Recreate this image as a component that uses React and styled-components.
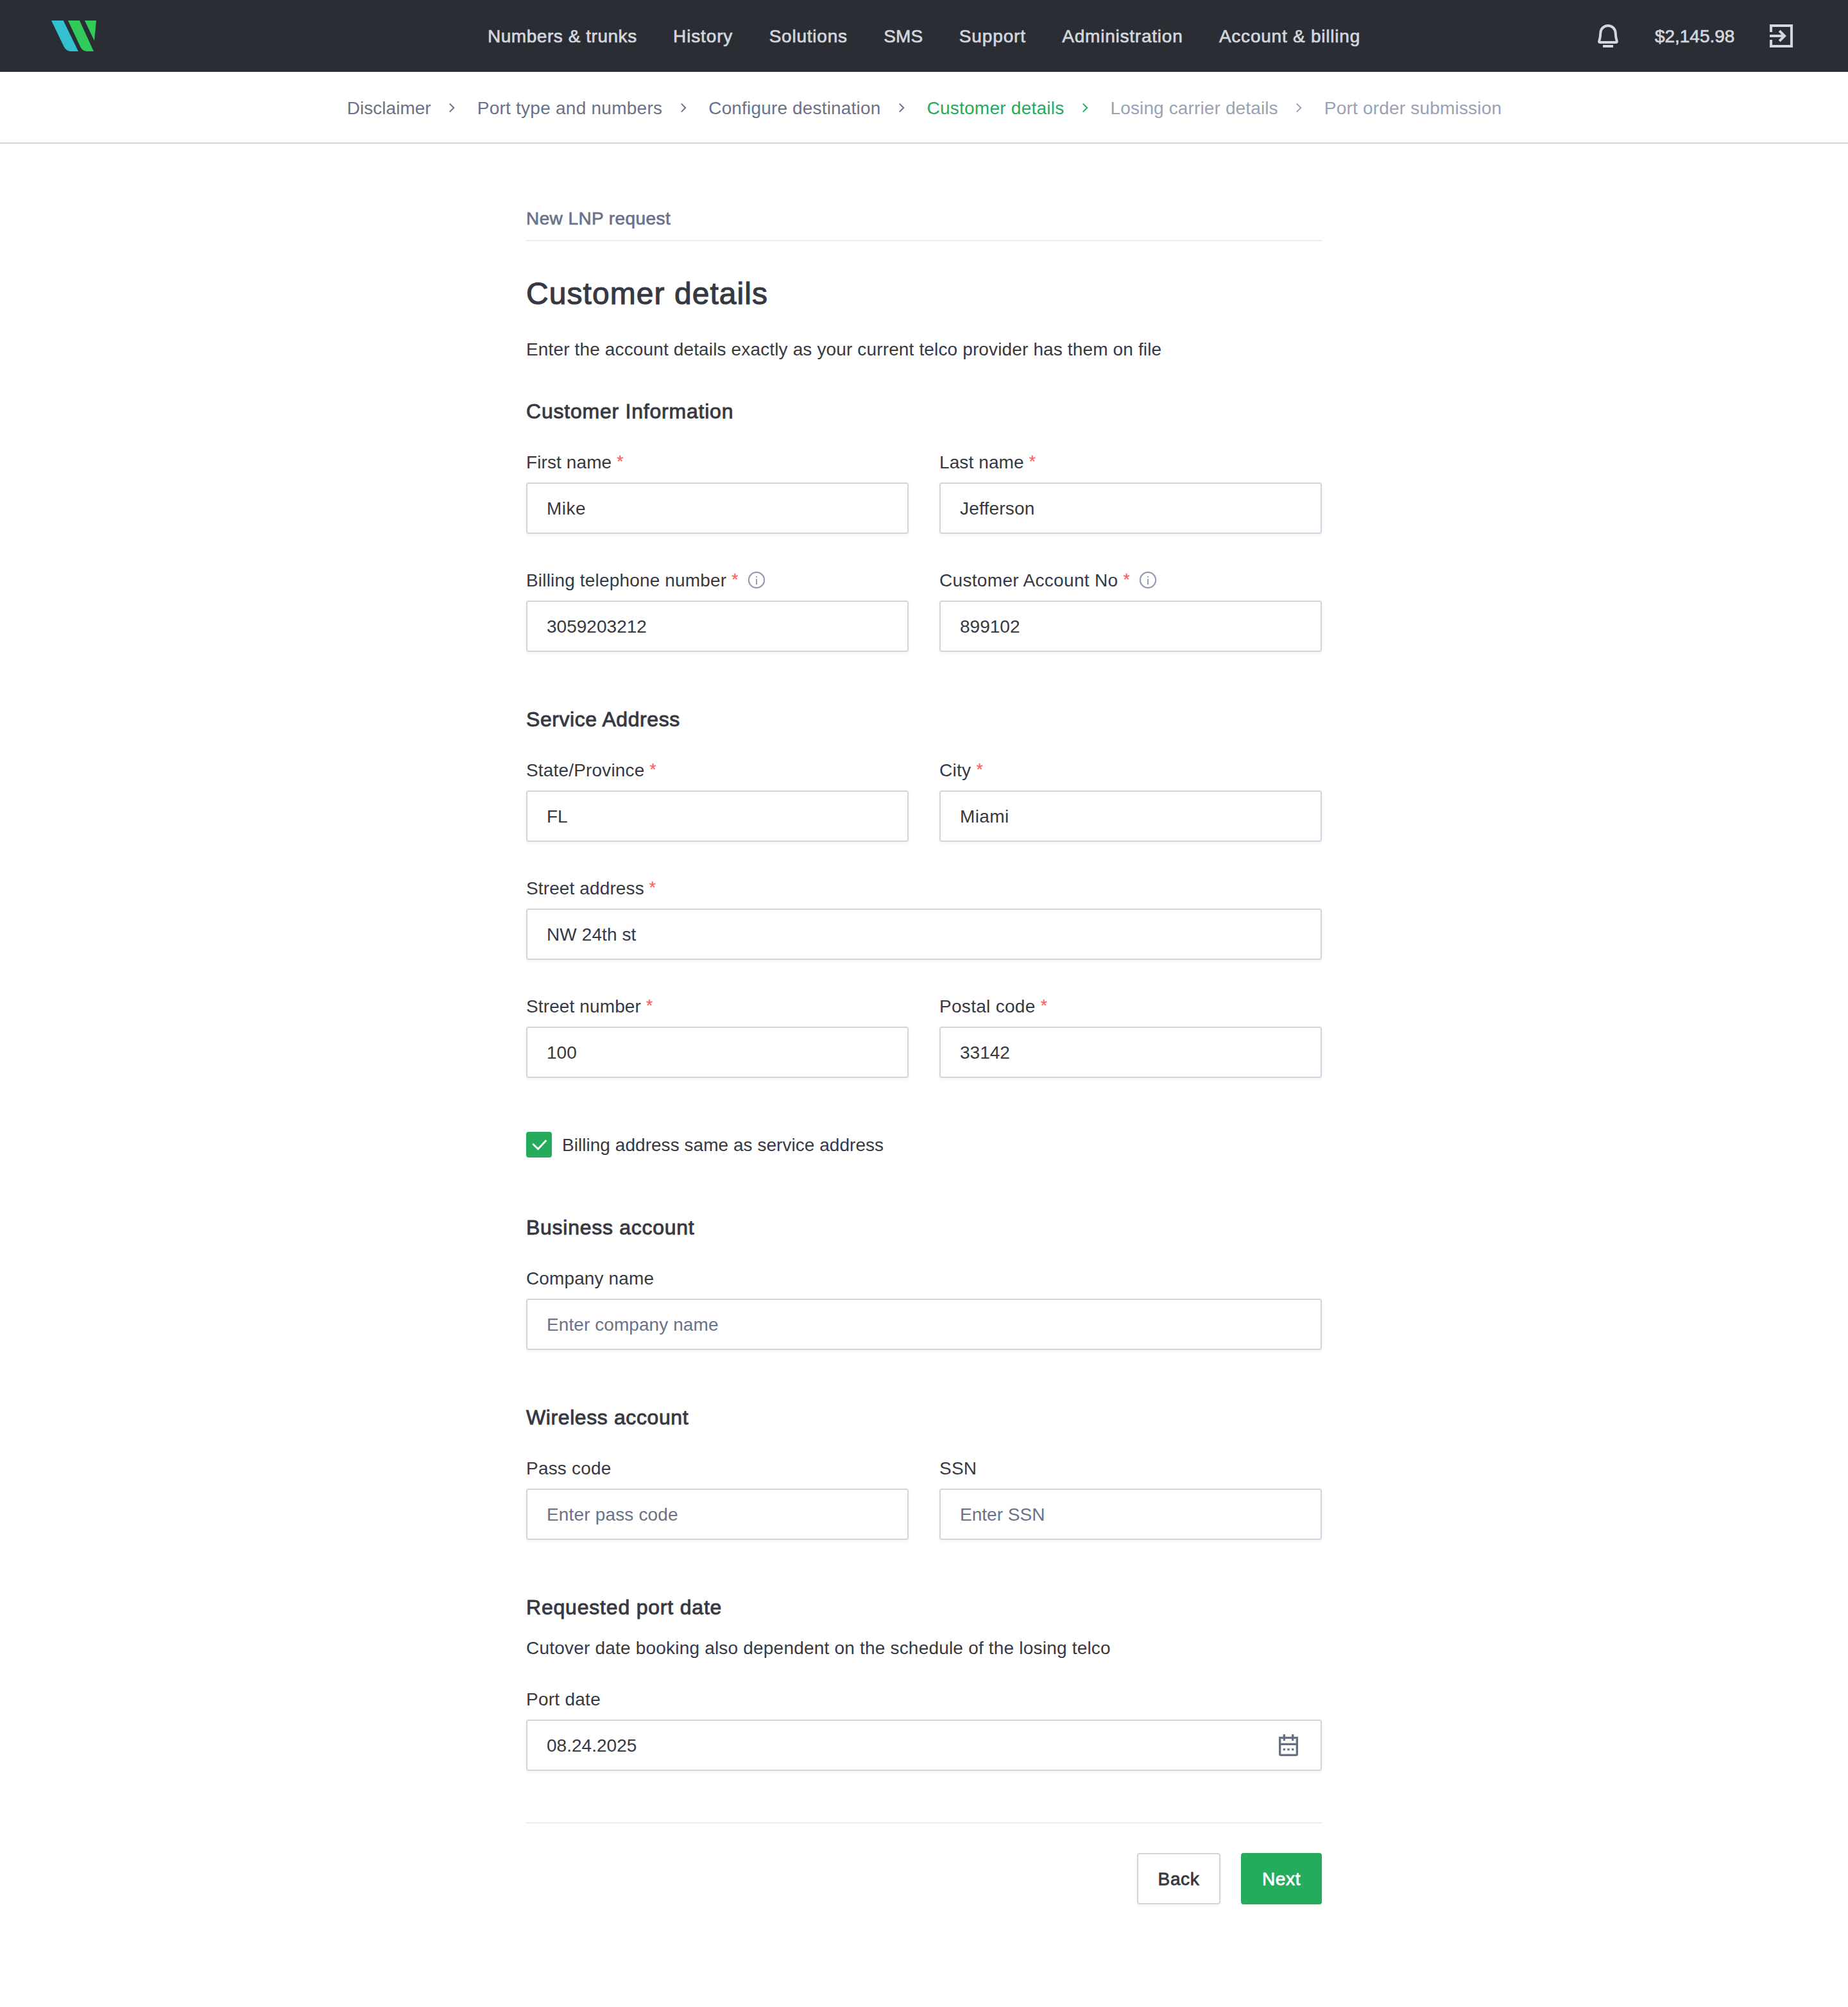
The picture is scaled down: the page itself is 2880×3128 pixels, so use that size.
import React, { Component } from 'react';
import styled, { createGlobalStyle, css } from 'styled-components';

const navItems = [
    { text: 'Numbers & trunks', track: 0.54 },
    { text: 'History', track: 0.86 },
    { text: 'Solutions', track: 0.78 },
    { text: 'SMS', track: 0.15 },
    { text: 'Support', track: 0.87 },
    { text: 'Administration', track: 0.77 },
    { text: 'Account & billing', track: 0.77 }
];

const steps = [
    { text: 'Disclaimer', track: 0.03 },
    { text: 'Port type and numbers', track: 0.25 },
    { text: 'Configure destination' },
    { text: 'Customer details', track: 0.25, status: 'active' },
    { text: 'Losing carrier details', track: 0.13, status: 'next' },
    { text: 'Port order submission', track: 0.2, status: 'next' }
];

const Logo = () => (
    <svg width="70" height="48" viewBox="0 0 70 48">
        <path d="M0 0H18.7L42 48H31.5C26 48 22 45.5 19.5 40.5Z" fill="#33c0cf" />
        <path d="M26 0H44L66 48H56.500C51 48 47.500 45.500 45 40.500Z" fill="#33ca5c" />
        <path d="M52 0H70L67 31.5Z" fill="#33ca5c" />
    </svg>
);

const BellIcon = () => (
    <svg width="48" height="48" viewBox="0 0 48 48" fill="none" stroke="currentColor" strokeWidth="4">
        <path d="M24 8C17.400 8 12.600 12.800 12.300 19.500C12.100 25 11.600 28 10.300 31.800Q9.500 34 11.400 34H36.600Q38.500 34 37.700 31.800C36.400 28 35.900 25 35.700 19.500C35.400 12.800 30.600 8 24 8Z" />
        <path d="M16 40H32" />
    </svg>
);

const LogoutIcon = () => (
    <svg width="48" height="48" viewBox="0 0 48 48" fill="none" stroke="currentColor" strokeWidth="4">
        <path d="M8 18V8H40V40H8V30" />
        <path d="M6 24H28M21.100 16L29.100 24L21.100 32" />
    </svg>
);

const InfoIcon = () => (
    <svg width="28" height="28" viewBox="0 0 28 28" fill="none" stroke="currentColor" strokeWidth="2.2">
        <circle cx="14" cy="14" r="12.1" />
        <path d="M14 8.200V9.900M14 12.300V21" strokeWidth="2" />
    </svg>
);

const CalendarIcon = () => (
    <svg width="40" height="40" viewBox="0 0 40 40" fill="none" stroke="currentColor" strokeWidth="3.33">
        <path d="M6.670 8.330H33.330V33.800Q33.330 35.330 31.800 35.330H8.200Q6.670 35.330 6.670 33.800Z" />
        <path d="M6 18.330H34M13.330 3V13M26.670 3V13" />
        <path d="M11.670 26.670H15M18.330 26.670H21.670M25 26.670H28.330" />
    </svg>
);

const Chevron = () => (
    <svg width="16" height="16" viewBox="0 0 16 16" fill="none" stroke="currentColor" strokeWidth="2">
        <path d="M4.800 1.600L11.200 8L4.800 14.400" />
    </svg>
);

const Field = ({ label, track, required, info, value, placeholder, valueTrack, icon }) => (
    <StyledField>
        <Label $track={track}>
            <span>{label}</span>
            {required && <Required>*</Required>}
            {info && <Info><InfoIcon /></Info>}
        </Label>
        <InputBox>
            <Input type="text" defaultValue={value} placeholder={placeholder} $track={valueTrack} />
            {icon}
        </InputBox>
    </StyledField>
);

class App extends Component {
    render() {
        return (
            <Page>
                <GlobalStyle />
                <Header>
                    <Logo />
                    <Nav>
                        {navItems.map(item => (
                            <NavLink key={item.text} $track={item.track}>{item.text}</NavLink>
                        ))}
                    </Nav>
                    <Account>
                        <BellIcon />
                        <NavLink $track={-0.05}>$2,145.98</NavLink>
                        <LogoutIcon />
                    </Account>
                </Header>
                <Steps>
                    {steps.map((step, i) => (
                        <Step key={step.text} $status={step.status}>
                            <StepText $track={step.track}>{step.text}</StepText>
                            {i < steps.length - 1 && <StepArrow><Chevron /></StepArrow>}
                        </Step>
                    ))}
                </Steps>
                <Form>
                    <Request>New LNP request</Request>
                    <Title>Customer details</Title>
                    <Text $track={0.14}>Enter the account details exactly as your current telco provider has them on file</Text>

                    <Section $gap={56}>
                        <SectionTitle $track={0.78}>Customer Information</SectionTitle>
                        <Fields>
                            <Row>
                                <Field label="First name" track={0.1} required value="Mike" valueTrack={0.5} />
                                <Field label="Last name" track={0.1} required value="Jefferson" valueTrack={0.2} />
                            </Row>
                            <Row>
                                <Field label="Billing telephone number" required info value="3059203212" />
                                <Field label="Customer Account No" track={0.32} required info value="899102" />
                            </Row>
                        </Fields>
                    </Section>

                    <Section>
                        <SectionTitle $track={0.57}>Service Address</SectionTitle>
                        <Fields>
                            <Row>
                                <Field label="State/Province" required value="FL" />
                                <Field label="City" track={0.3} required value="Miami" valueTrack={0.4} />
                            </Row>
                            <Field label="Street address" track={0.12} required value="NW 24th st" valueTrack={0.1} />
                            <Row>
                                <Field label="Street number" track={0.12} required value="100" />
                                <Field label="Postal code" track={0.3} required value="33142" />
                            </Row>
                        </Fields>
                        <Checkbox>
                            <Tick>
                                <svg width="40" height="40" viewBox="0 0 40 40" fill="none" stroke="#fff" strokeWidth="2.8">
                                    <path d="M10.300 18.800L18.600 26.800L31.300 13.200" />
                                </svg>
                            </Tick>
                            <Text $track={0.04}>Billing address same as service address</Text>
                        </Checkbox>
                    </Section>

                    <Section $gap={89}>
                        <SectionTitle $track={0.73}>Business account</SectionTitle>
                        <Field label="Company name" track={0.12} placeholder="Enter company name" valueTrack={0.08} />
                    </Section>

                    <Section>
                        <SectionTitle $track={0.6}>Wireless account</SectionTitle>
                        <Row>
                            <Field label="Pass code" track={0.2} placeholder="Enter pass code" valueTrack={0.16} />
                            <Field label="SSN" track={0.2} placeholder="Enter SSN" valueTrack={0.02} />
                        </Row>
                    </Section>

                    <Section>
                        <SectionTitle $track={0.8} $tight>Requested port date</SectionTitle>
                        <Hint $track={0.2}>Cutover date booking also dependent on the schedule of the losing telco</Hint>
                        <Field label="Port date" track={0.26} value="08.24.2025" icon={<CalendarIcon />} />
                    </Section>

                    <Actions>
                        <Button $width={130}>Back</Button>
                        <Button $width={126} $primary>Next</Button>
                    </Actions>
                </Form>
            </Page>
        );
    }
}

const GlobalStyle = createGlobalStyle`
    * {
        box-sizing: border-box;
    }
    body {
        margin: 0;
        background: #fff;
    }
    svg {
        display: block;
        flex-shrink: 0;
    }
`;

const tracking = css`
    letter-spacing: ${props => props.$track === undefined ? 0.17 : props.$track}px;
`;

const Page = styled.div`
    min-height: 3128px;
    font-family: "Liberation Sans", Arial, sans-serif;
    font-size: 28px;
    line-height: 41px;
    color: #363842;
`;

const Header = styled.header`
    display: grid;
    grid-template-columns: 1fr auto 1fr;
    align-items: center;
    height: 112px;
    padding: 0 80px;
    background: #2a2d33;
    color: #d3d6dc;
`;

const Nav = styled.nav`
    display: flex;
    gap: 56.4px;
`;

const NavLink = styled.span`
    ${tracking}
    margin-top: 1px;
    white-space: nowrap;
    -webkit-text-stroke: 0.7px currentColor;
`;

const Account = styled.div`
    display: flex;
    align-items: center;
    justify-content: flex-end;
    gap: 48.8px;
`;

const Steps = styled.div`
    display: flex;
    align-items: center;
    justify-content: center;
    height: 112px;
    padding: 2px 0 0 1px;
    border-bottom: 2px solid #ced6e0;
`;

const stepColors = {
    active: '#24ab5c',
    next: '#98a2b6'
};

const Step = styled.div`
    display: flex;
    align-items: center;
    color: ${props => stepColors[props.$status] || '#697289'};
`;

const StepText = styled.span`
    ${tracking}
    margin-top: 1px;
    white-space: nowrap;
`;

const StepArrow = styled.span`
    margin: 0 31.500px 0 24.500px;
`;

const Form = styled.form`
    width: 1240px;
    margin: 0 auto;
    padding-top: 96px;
`;

const Request = styled.div`
    padding-bottom: 13px;
    border-bottom: 2px solid #eaecf2;
    color: #697289;
    letter-spacing: 0.41px;
    -webkit-text-stroke: 0.7px currentColor;
`;

const Title = styled.h1`
    margin: 51px 0 36px;
    font-size: 48px;
    line-height: 61px;
    font-weight: 400;
    letter-spacing: 1.06px;
    -webkit-text-stroke: 1.1px currentColor;
`;

const Text = styled.p`
    ${tracking}
    margin: 0;
`;

const Hint = styled(Text)`
    margin-bottom: 39px;
`;

const Section = styled.section`
    margin-top: ${props => props.$gap || 85}px;
`;

const SectionTitle = styled.h2`
    ${tracking}
    margin: 0 0 ${props => props.$tight ? 23 : 39}px;
    font-size: 32px;
    line-height: 40px;
    font-weight: 400;
    -webkit-text-stroke: 0.9px currentColor;
`;

const Fields = styled.div`
    display: flex;
    flex-direction: column;
    gap: 52px;
`;

const Row = styled.div`
    display: grid;
    grid-template-columns: 1fr 1fr;
    gap: 48px;
`;

const StyledField = styled.div`
    display: flex;
    flex-direction: column;
    gap: 11px;
`;

const Label = styled.label`
    ${tracking}
    display: flex;
    align-items: center;
    height: 41px;
`;

const Required = styled.span`
    margin: 0 0 3px 8px;
    font-size: 26px;
    color: #fb6262;
    -webkit-text-stroke: 0.3px currentColor;
`;

const Info = styled.span`
    margin: 0 0 1px 14px;
    color: #949cb0;
`;

const InputBox = styled.div`
    display: flex;
    align-items: center;
    height: 80px;
    padding: 0 30px;
    border: 2px solid #ced6e0;
    border-radius: 4px;
    background: #fff;
    box-shadow: 0 2px 4px rgba(16, 24, 40, 0.05);
    color: #667085;
`;

const Input = styled.input`
    letter-spacing: ${props => props.$track || 0.02}px;
    flex: 1;
    min-width: 0;
    height: 41px;
    margin-top: 1px;
    padding: 0;
    border: none;
    outline: none;
    background: transparent;
    font-family: inherit;
    font-size: 28px;
    line-height: 41px;
    color: #363842;
    &::placeholder{
        color: #697289;
        opacity: 1;
    }
`;

const Checkbox = styled.div`
    display: flex;
    gap: 16px;
    height: 40px;
    margin-top: 84px;
`;

const Tick = styled.span`
    width: 40px;
    height: 40px;
    border-radius: 4px;
    background: #24ab5c;
    box-shadow: 0 2px 4px rgba(16, 24, 40, 0.05);
`;

const Actions = styled.div`
    display: flex;
    justify-content: flex-end;
    gap: 32px;
    margin-top: 80px;
    padding-top: 46px;
    border-top: 2px solid #eaecf2;
`;

const Button = styled.button`
    width: ${props => props.$width}px;
    height: 80px;
    padding: 1px 0 0;
    border: 2px solid ${props => props.$primary ? '#24ab5c' : '#ced6e0'};
    border-radius: 4px;
    background: ${props => props.$primary ? '#24ab5c' : '#fff'};
    box-shadow: 0 2px 4px rgba(16, 24, 40, 0.05);
    font-family: inherit;
    font-size: 28px;
    line-height: 41px;
    letter-spacing: 0.65px;
    color: ${props => props.$primary ? '#fff' : '#363842'};
    -webkit-text-stroke: 0.8px currentColor;
`;

export default App;
